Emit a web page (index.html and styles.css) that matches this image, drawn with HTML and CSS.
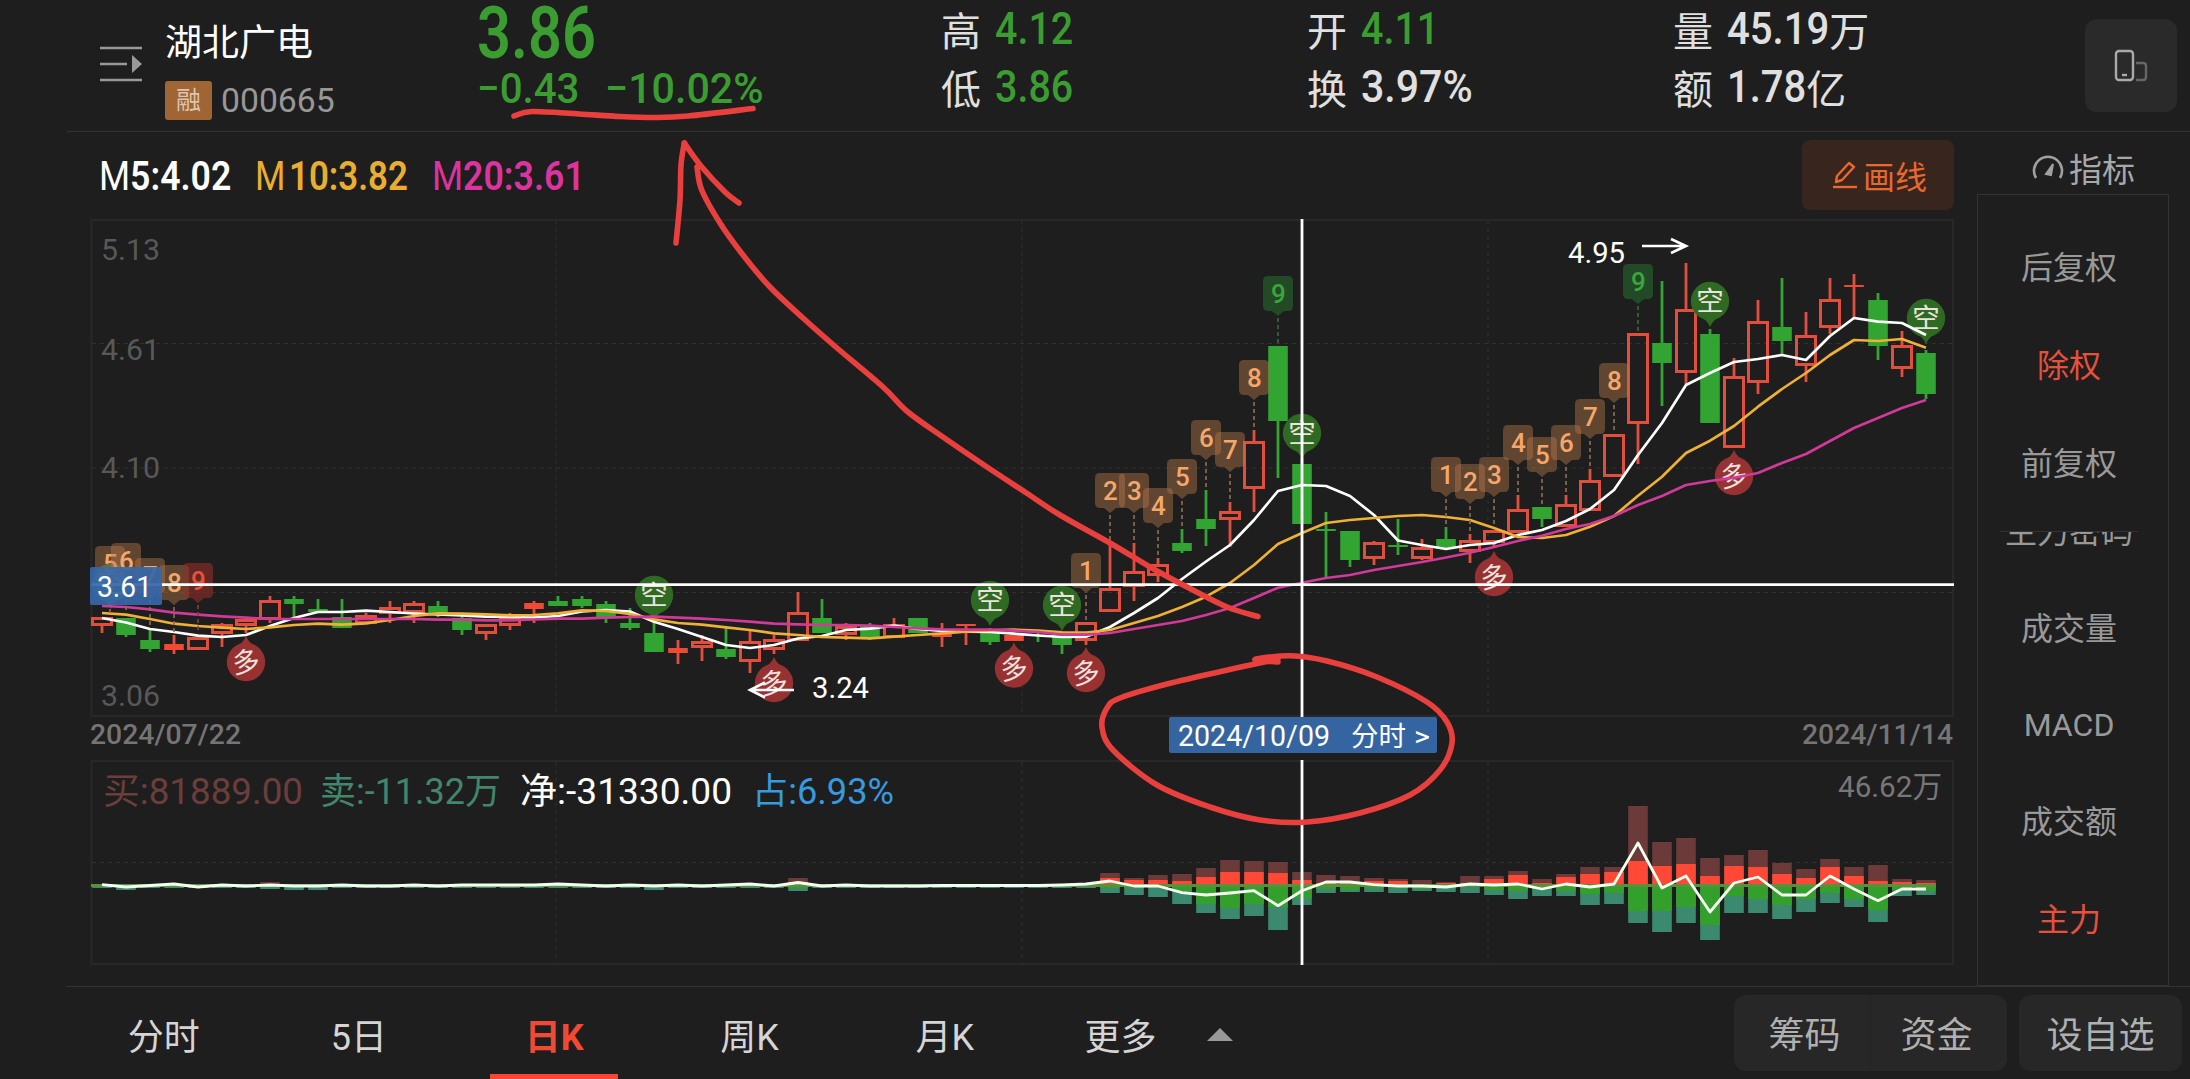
FILE: index.html
```html
<!DOCTYPE html>
<html lang="zh-CN">
<head>
<meta charset="utf-8">
<title>湖北广电 000665</title>
<link rel="stylesheet" href="styles.css">
</head>
<body>
<header class="quote">
  <svg class="menu-icon" width="44" height="36" viewBox="0 0 44 36"><path d="M1 2H43M1 18H28M1 34H43" stroke="#999" stroke-width="2.6"/><path d="M33 9L43 18L33 27Z" fill="#999"/></svg>
  <div class="stock">
    <div class="name">湖北广电</div>
    <div class="code-row"><span class="tag">融</span><span class="code" data-w="114">000665</span></div>
  </div>
  <div class="price">
    <div class="last"><span data-w="119">3.86</span></div>
    <div class="change"><span data-w="102">−0.43</span><span data-w="159">−10.02%</span></div>
  </div>
  <div class="stats">
    <div class="stat"><i>高</i><b class="down" data-w="78">4.12</b></div>
    <div class="stat"><i>开</i><b class="down" data-w="78">4.11</b></div>
    <div class="stat"><i>量</i><b data-w="102">45.19</b><i>万</i></div>
    <div class="stat"><i>低</i><b class="down" data-w="78">3.86</b></div>
    <div class="stat"><i>换</i><b data-w="112">3.97%</b></div>
    <div class="stat"><i>额</i><b data-w="79">1.78</b><i>亿</i></div>
  </div>
  <button class="rotate"><svg width="34" height="34" viewBox="0 0 34 34" fill="none"><rect x="2" y="2" width="17" height="29" rx="3" stroke="#aaa" stroke-width="2.4"/><path d="M8 26H13" stroke="#aaa" stroke-width="2.4"/><path d="M22 14H29Q32 14 32 17V28Q32 31 29 31H22" stroke="#666" stroke-width="2.4"/></svg></button>
</header>
<main>
  <section class="chart">
    <div class="toolbar">
      <span class="ma white"><span data-w="132"><em>M</em>5:4.02</span></span>
      <span class="ma orange"><span data-w="153"><em>M</em>&#8202;10:3.82</span></span>
      <span class="ma pink"><span data-w="153"><em>M</em>20:3.61</span></span>
      <button class="draw"><svg width="26" height="30" viewBox="0 0 26 30" fill="none" stroke="#e8682e" stroke-width="2.4"><path d="M4 22L5 16L17 3L22 7L10 20Z" stroke-linejoin="round"/><path d="M1 27H25"/></svg>画线</button>
    </div>
    <svg id="plot" class="plot" width="1904" height="772" viewBox="67 214 1904 772"></svg>
  </section>
  <aside>
    <div class="side-title"><svg width="34" height="30" viewBox="0 0 34 30" fill="none"><path d="M5 25A14 14 0 1 1 29 25" stroke="#a0a0a0" stroke-width="2.6"/><path d="M15 21L22 11L20 22Z" fill="#a0a0a0" stroke="#a0a0a0" stroke-width="2"/></svg>指标</div>
    <div class="panel">
      <div class="adjust"><span>后复权</span><span class="on">除权</span><span>前复权</span></div>
      <div class="indicators"><span class="cut">主力密码</span><span>成交量</span><span>MACD</span><span>成交额</span><span class="on">主力</span></div>
    </div>
  </aside>
</main>
<nav>
  <a>分时</a><a>5日</a><a class="active">日K</a><a>周K</a><a>月K</a><a class="more">更多<svg width="26" height="13" viewBox="0 0 26 13"><path d="M0 13L13 0L26 13Z" fill="#999"/></svg></a>
  <div class="actions"><div class="group"><button>筹码</button><button>资金</button></div><button class="single">设自选</button></div>
</nav>
<svg id="ink" class="ink" width="2190" height="1079"></svg>
<script src="script.js"></script>
</body>
</html>
```
FILE: styles.css
```css
* { box-sizing: border-box; }
body { margin: 0; width: 2190px; height: 1079px; overflow: hidden; background: #1e1e1e; color: #e0e0e0; font-family: Roboto, "Noto Sans CJK SC", sans-serif; display: flex; flex-direction: column; position: relative; }
button { border: 0; margin: 0; padding: 0; font: inherit; color: inherit; background: none; }
i, em { font-style: normal; }
[data-w] { display: inline-block; transform-origin: 0 50%; white-space: nowrap; }

.quote { height: 132px; flex: none; display: flex; align-items: flex-start; margin-left: 67px; padding-left: 32px; border-bottom: 1px solid #333; }
.menu-icon { margin-top: 46px; flex: none; }
.stock { width: 312px; margin-left: 22px; padding-top: 23px; flex: none; }
.name { font-size: 37px; line-height: 42px; color: #fff; white-space: nowrap; }
.code-row { display: flex; align-items: center; gap: 9px; margin-top: 16px; height: 39px; }
.tag { width: 47px; height: 39px; border-radius: 3px; background: #a06535; color: #dcc4ae; font-size: 25px; line-height: 39px; text-align: center; }
.code { font-size: 34px; color: #979797; line-height: 39px; }
.price { width: 464px; flex: none; color: #3b9c31; font-weight: 500; }
.last { font-size: 72px; line-height: 68px; height: 66px; font-weight: 600; }
.change { font-size: 43px; line-height: 44px; display: flex; gap: 26px; }
.stats { display: grid; grid-template-columns: 366px 366px 366px; grid-template-rows: 58px 58px; flex: none; }
.stat { display: flex; align-items: center; height: 58px; font-size: 40px; white-space: nowrap; }
.stat i:first-child { width: 54px; }
.stat b { font-size: 44px; font-weight: 500; }
.down { color: #3b9c31; }
.rotate { width: 92px; height: 93px; margin: 19px 0 0 46px; border-radius: 12px; background: #2a2a2a; display: grid; place-items: center; flex: none; }

main { display: flex; height: 854px; flex: none; padding-left: 67px; }
.chart { width: 1904px; flex: none; }
.toolbar { height: 82px; display: flex; padding-left: 32px; align-items: flex-start; gap: 25px; }
.ma { font-size: 41px; font-weight: 600; line-height: 48px; padding-top: 20px; }
.ma em { font-weight: 400; }
.white { color: #fff; }
.orange { color: #e9ae31; margin-left: -1px; }
.pink { color: #dc349d; margin-left: -1px; }
.draw { width: 152px; height: 70px; margin: 8px 17px 0 auto; border-radius: 8px; background: #38251e; color: #e8682e; font-size: 32px; display: flex; align-items: center; justify-content: center; gap: 5px; padding-left: 3px; }
.plot { display: block; }

aside { width: 198px; padding-left: 6px; color: #999; font-size: 32px; line-height: 44px; }
.side-title { height: 62px; display: flex; align-items: center; justify-content: center; gap: 4px; color: #a8a8a8; font-size: 33px; padding: 16px 0 0 20px; line-height: 46px; }
.side-title svg { margin-top: -6px; }
.panel { width: 192px; height: 792px; border: 1px solid #333; padding: 25px 30px 0 22px; text-align: center; }
.adjust { height: 311px; padding-top: 26px; display: flex; flex-direction: column; gap: 54px; }
.indicators { height: 440px; overflow: hidden; border-top: 1px solid #333; display: flex; flex-direction: column; gap: 53px; white-space: nowrap; }
.indicators .cut { margin-top: -22px; }
.indicators span:nth-child(3) { margin-top: -1px; }
.indicators .on { margin-top: 1px; }
.on { color: #e4513d; }

nav { height: 93px; flex: none; margin-left: 66px; border-top: 1px solid #333; display: flex; }
nav a { width: 195.3px; height: 92px; line-height: 102px; text-align: center; font-size: 36px; color: #d5d5d5; flex: none; position: relative; }
nav .active { color: #f04a35; font-weight: 700; }
nav .active::after { content: ""; position: absolute; left: 33px; width: 128px; bottom: 0; height: 5px; background: #f84632; }
nav .more { display: flex; align-items: center; padding: 9px 0 0 42px; gap: 50px; line-height: 50px; }
nav .more svg { margin-top: -7px; }
.actions { display: flex; gap: 12px; margin: 8px 8px 0 auto; height: 76px; color: #b0b0b0; font-size: 36px; line-height: 52px; }
.actions button { padding-top: 6px; }
.group { display: flex; width: 273px; border-radius: 12px; background: #272727; padding: 0 5px; }
.group button { flex: 1; }
.group button + button { border-left: 1px solid #232323; }
.single { width: 163px; border-radius: 12px; background: #272727; }
.ink { position: absolute; left: 0; top: 0; pointer-events: none; }
```
FILE: script.js
```js
// Squeeze figures to the narrow digit widths used in the quote header
document.querySelectorAll('[data-w]').forEach(el => {
  const target = +el.dataset.w, own = el.offsetWidth;
  el.style.transform = `scaleX(${target / own})`;
  el.style.marginRight = `${target - own}px`;
});

const STEP = 24, X0 = 102, x = i => X0 + STEP * i;
const out = [];
const add = s => out.push(s);
const line = (x1, y1, x2, y2, c, w = 2, extra = '') => add(`<line x1="${x1}" y1="${y1}" x2="${x2}" y2="${y2}" stroke="${c}" stroke-width="${w}" ${extra}/>`);
const rect = (a, b, w, h, c, extra = '') => add(`<rect x="${a}" y="${b}" width="${w}" height="${h}" fill="${c}" ${extra}/>`);
const text = (s, a, y, w, size, c, extra = '') => add(`<text x="${a}" y="${y}" font-size="${size}" fill="${c}" ${w ? `textLength="${w}" lengthAdjust="spacingAndGlyphs"` : ''} ${extra}>${s}</text>`);

// Frames and grid
const grid = '#282828';
add(`<path d="M91.5 220H1953V716H91.5ZM91.5 761H1953V964H91.5Z" fill="none" stroke="${grid}" stroke-width="2"/>`);
[556, 1022, 1488].forEach(v => { line(v, 220, v, 716, '#2a2a2a', 1.5, 'stroke-dasharray="4 4"'); line(v, 762, v, 963, '#2a2a2a', 1.5, 'stroke-dasharray="4 4"'); });
[343.5, 468, 592.5, 862.5].forEach(v => line(92, v, 1952, v, '#303030', 1.2, 'stroke-dasharray="4 4"'));
text('5.13', 101, 259.5, 59, 30, '#585858');
text('4.61', 101, 360, 59, 30, '#585858');
text('4.10', 101, 478, 59, 30, '#585858');
text('3.06', 101, 705.5, 59, 30, '#585858');

// type (r hollow, R filled, g), body top, body bottom, high, low
const candles = `r 617 626 617 633|g 618 635 618 637|g 640 649 629 652|R 644 650 635 654|r 637 650 637 650|r 624 634 623 647|r 619 626 619 633|r 600 620 596 623|g 599 604 596 619|g 609 612 599 612|g 617 628 599 628|r 615 624 613 624|r 607 614 601 623|r 603 613 601 623|g 606 613 601 617|g 618 630 614 635|r 624 634 624 640|r 617 626 613 630|R 603 609 601 623|g 601 606 596 606|g 599 606 596 608|g 604 618 601 623|g 623 628 608 630|g 633 652 620 652|R 648 653 640 664|r 641 648 635 661|g 649 657 628 659|r 641 662 630 673|r 639 650 635 654|r 612 641 592 641|g 618 633 599 633|r 626 635 623 640|g 625 637 623 640|r 624 638 618 638|g 618 633 618 633|R 634 637 623 647|R 624 626 624 645|g 630 642 628 645|R 635 641 635 641|g 630 632 630 642|g 635 645 635 654|r 622 641 622 645|r 588 612 544 612|r 571 587 543 601|r 564 576 558 582|g 543 551 529 553|g 519 529 490 546|r 511 520 502 547|r 441 489 430 512|g 346 421 346 478|g 464 524 458 524|g 529 531 512 577|g 531 560 531 567|r 542 559 541 565|g 545 547 519 555|r 547 559 539 560|g 539 548 527 548|r 540 552 534 563|r 530 543 530 548|r 509 533 495 533|g 507 519 507 527|r 504 527 495 527|r 480 511 469 511|r 434 477 434 477|r 333 424 333 464|g 343 363 281 406|r 309 373 263 384|g 334 423 329 423|r 376 448 358 448|r 321 383 300 394|g 327 341 278 354|r 335 366 312 382|r 299 328 278 334|R 285 287 274 318|g 300 346 293 360|r 345 369 331 377|g 353 394 350 399`.split('|').map(s => s.split(' '));
candles.forEach(([t, a, b, hi, lo], i) => {
  a = +a; b = +b;
  const c = t === 'g' ? '#31a431' : '#e04f3e', X = x(i);
  if (+hi < a) line(X, hi, X, a, c, 2.8);
  if (+lo > b) line(X, b, X, lo, c, 2.8);
  if (t === 'r') rect(X - 9.5, a + 1.5, 19, b - a - 3, 'none', `stroke="${c}" stroke-width="3"`);
  else rect(X - 9.8, a, 19.6, b - a, t === 'R' ? '#f04a35' : c);
});

// Long / short signal pins
const pin = (px, cy, up) => {
  const c = up ? '#983232' : '#2f6a22', s = up ? -1 : 1;
  add(`<circle cx="${px}" cy="${cy}" r="19.2" fill="${c}"/><path d="M${px - 13} ${cy + 14 * s}Q${px - 3} ${cy + 18 * s} ${px} ${cy + 26 * s}Q${px + 3} ${cy + 18 * s} ${px + 13} ${cy + 14 * s}Z" fill="${c}"/>`);
  add(`<text x="${px}" y="${cy + 10}" font-size="27.5" text-anchor="middle" fill="#ece2de" ${up ? `transform="rotate(-8 ${px} ${cy})"` : ''}>${up ? '多' : '空'}</text>`);
};
pin(111, 583, false);
[[23, 595], [37, 600], [40, 605], [50, 433], [67, 301], [76, 318]].forEach(([i, y]) => pin(x(i), y, false));
[[6, 662], [28, 683], [38, 668.5], [41, 673], [58, 577], [68, 476]].forEach(([i, y]) => pin(x(i), y, true));

// Moving averages
const poly = (ys, c, w) => add(`<polyline points="${ys.map((y, i) => x(i) + ',' + y).join(' ')}" fill="none" stroke="${c}" stroke-width="${w}" stroke-linejoin="round"/>`);
poly([618,622.5,629,632,635.7,637,635,626,618,612,612,610.7,612,613.5,614.5,615.5,616.7,617,617.5,616,611.5,610,611.5,621.7,629,637,645,648,645,638.5,636,630,628.7,625.7,629,631,631.7,632,633.7,635.5,637,636.7,627,613,598,579,561.5,545,520,491,485,486,496,515,540.5,545,549,545,543,535,530,521,509,490,455,423,385,373,362,359,355,360,336,318,321.7,323,335], '#fff', 2.7);
poly([613,614.7,619,623.7,626,627.7,629,627.3,625,623.7,624.7,623.3,620,616,613.3,613.7,614.3,615.3,615,613.3,610.3,611,614,619.3,623,624.7,627.3,630,633.3,635,637,637.7,638.3,636.7,635,633.3,631.7,630.3,629.7,630.7,632.3,632.5,630,623,616,607,596.7,583,565,544,533,523,520,518,516,515,517,520,528,537,538,535,526.7,516,495.7,476.7,453,440.7,426,406.7,389,373,355,340,341,339,347.7], '#eeb037', 2.7);
poly([606,607,609.3,612.7,614.7,616.3,617.7,619,619,619,619,619,619,619,619.7,619.7,620.3,620.3,619.5,618.7,618.7,617.7,617,616.7,617.7,618.7,620,621.7,623.7,624.3,625,625,625.7,627,628.3,629.3,629.7,629.7,630.7,632,634.7,634.7,633,629,625,621,615,608,598,587.7,582.7,578,575,570,566,562,557.5,552.7,547,541,535.7,529,524,516,505,496,485,481,477.7,473,463,454,441,428,418,408,400], '#d03a98', 2.7);

// Sequence number flags: index, digit, top
[[0.33,5,546],[1,6,543],[2,7,558],[3,8,565],[4,9,563,'red'],[41,1,553],[42,2,473],[43,3,473],[44,4,488],[45,5,459],[46,6,420],[47,7,432],[48,8,360],[49,9,276,'green'],[56,1,457],[57,2,464],[58,3,457],[59,4,425],[60,5,437],[61,6,425],[62,7,399],[63,8,363],[64,9,264,'green']].forEach(([i, n, y, k]) => {
  const [bg, fg, o, dash] = k === 'red' ? ['#922f28', '#e8503c', .6, '#8e3d36'] : k === 'green' ? ['#27622c', '#3aa63a', .65, '#3a6b3c'] : ['#b8794a', '#f5a76a', .43, '#92704f'];
  const X = x(i);
  line(X, y + 42, X, y + 70, dash, 1.6, 'stroke-dasharray="4 3"');
  add(`<path d="M${X - 10} ${y}H${X + 10}Q${X + 15} ${y} ${X + 15} ${y + 5}V${y + 30}Q${X + 15} ${y + 35} ${X + 10} ${y + 35}H${X + 6}L${X} ${y + 40}L${X - 6} ${y + 35}H${X - 10}Q${X - 15} ${y + 35} ${X - 15} ${y + 30}V${y + 5}Q${X - 15} ${y} ${X - 10} ${y}Z" fill="${bg}" opacity="${o}"/>`);
  add(`<text x="${X + .5}" y="${y + 27}" font-size="26" font-weight="500" text-anchor="middle" fill="${fg}">${n}</text>`);
});

// High and low markers
text('4.95', 1568, 263, 57, 29, '#fff');
add('<path d="M1642 246H1685M1671 239L1686 246L1671 253" fill="none" stroke="#fff" stroke-width="2.6"/>');
text('3.24', 812, 697.5, 57, 29, '#fff');
add('<path d="M794 690H751M765 682.5L750 690L765 697.5" fill="none" stroke="#fff" stroke-width="2.6"/>');

// Dates and sub-chart legend
text('2024/07/22', 90, 743.5, 151, 28.5, '#757575', 'font-weight="500"');
text('2024/11/14', 1802, 743.5, 151, 28.5, '#757575', 'font-weight="500"');
text('买:81889.00', 103, 803.5, 200, 36, '#6b3e3b');
text('卖:-11.32万', 320, 803.5, 181, 36, '#42866c');
text('净:-31330.00', 520, 803.5, 212, 36, '#fff');
text('占:6.93%', 752, 803.5, 142, 36, '#369ae0');
text('46.62万', 1838, 796.5, 104, 30, '#777');

// Capital flow: total in, main in, main out, total out
const early = Array.from({ length: 42 }, (_, i) => [884, 884.5, 887, [1, 8, 9, 23].includes(i) ? 890 : 888]);
early[7] = [882, 884, 887, 889]; early[29] = [878, 882, 888, 891];
const flows = early.concat([[873,878,888,893],[878,880,888,895],[875,880,888,897],[874,881,891,904],[868,877,904,913],[860,872,908,919],[861,872,904,916],[862,873,907,930],[872,880,898,905],[875,883,889,893],[876,882,890,892],[878,881,888,892],[879,881,888,893],[880,884,889,891],[882,883,888,892],[876,883,887,893],[876,879,890,895],[871,875,891,899],[879,883,889,896],[874,877,891,896],[867,874,894,905],[867,872,893,904],[806,861,911,923],[842,866,911,932],[838,864,907,923],[858,876,925,940],[855,866,896,913],[850,867,899,913],[863,874,905,919],[869,878,899,912],[859,867,893,903],[867,876,899,907],[865,881,910,922],[879,882,890,896],[880,883,891,895]]);
flows.forEach(([a, b, c, d], i) => {
  const X = x(i) - 9.8, w = 19.6;
  rect(X, a, w, 885 - a, '#6c3a38'); rect(X, b, w, 885 - b, '#ff4835');
  rect(X, 885, w, d - 885, '#3b8a70'); rect(X, 885, w, c - 885, '#34a02c');
});
line(91, 885.5, 1936, 885.5, '#5a903c', 3);
poly([884.7,887,885.5,884,887,885,886,885,886,886,885,886,886,885,886,885,885,885,885,884,885,886,885,886,885,886,885,884,886,882.5,886,885,886,886,886,885.5,885.5,885.5,885.5,885.5,885,884,881,886,886,892.7,895,893,890.7,905.7,890.7,882,882,884.7,886,886,887,884,885,884,889,884,887,884,843,888,876,912,883,877,895,895,876,889,900.7,889,889], '#f4fff0', 2.8);

// Crosshair with its axis labels
line(1302, 219, 1302, 717, '#fff', 2.8);
line(1302, 760, 1302, 965, '#fff', 2.8);
line(91, 584.7, 1954, 584.7, '#fff', 2.8);
rect(90, 567, 72, 38, '#3767a8', 'rx="2" opacity="0.93"');
text('3.61', 97, 596.5, 55, 29, '#fff');
rect(1169, 717, 268, 36, '#3565a0', 'rx="2"');
text('2024/10/09', 1178, 746, 152, 29.5, '#fff');
text('分时', 1351, 746, 55, 27.5, '#fff');
text('&gt;', 1414, 746, 16, 28, '#fff');
document.getElementById('plot').innerHTML = out.join('');

// Freehand pen strokes, smoothed through their points
const smooth = p => p.reduce((d, c, i) => {
  if (!i) return `M${c}`;
  const a = p[i - 2] || p[i - 1], b = p[i - 1], e = p[i + 1] || c;
  return d + `C${b[0] + (c[0] - a[0]) / 6} ${b[1] + (c[1] - a[1]) / 6} ${c[0] - (e[0] - b[0]) / 6} ${c[1] - (e[1] - b[1]) / 6} ${c[0]} ${c[1]}`;
}, '');
const strokes = [
  [[514,116],[532,111.5],[579,114],[620,116.5],[655,117.5],[688,116],[753,108.5]],
  [[676,243],[680,200],[681,165],[684.3,143]],
  [[684.3,143],[701,166],[725,192],[739,203]],
  [[697,167],[701.7,190],[720,223],[743,255],[770,287],[803,318],[837,348],[883,387],[908,412],[943,437],[987,467],[1025,492],[1060,515],[1110,543],[1150,567],[1187,587],[1227,607],[1258,616.5]],
  [[1278,662],[1255,659.5],[1290,655.7],[1327,661],[1377,677],[1427,702],[1447,722],[1452,743],[1440,770],[1410,795],[1360,813],[1307,822],[1260,820],[1210,807],[1157,785],[1113,750],[1102,727],[1107,708],[1120,698],[1167,684],[1232,669],[1278,659]]
];
document.getElementById('ink').innerHTML = strokes.map(s => `<path d="${smooth(s)}" fill="none" stroke="#e9403e" stroke-width="5.6" stroke-linecap="round" stroke-linejoin="round"/>`).join('');
```
